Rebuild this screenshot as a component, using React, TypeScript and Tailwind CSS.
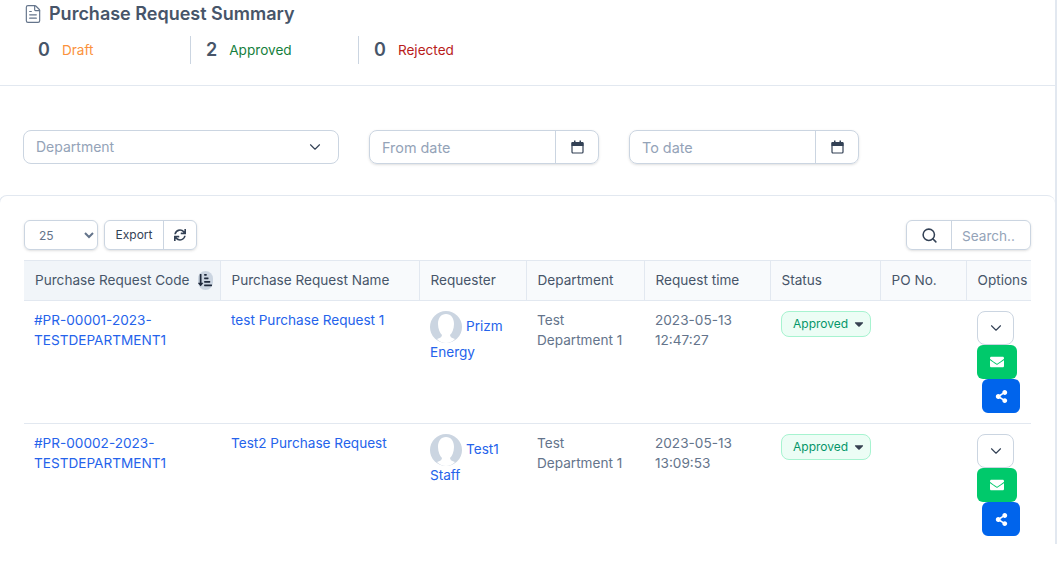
import { ChevronDown, FileText, Search } from 'lucide-react';
import { FaCaretDown, FaEnvelope, FaShareAlt, FaSortAmountDownAlt, FaSync } from 'react-icons/fa';

const rows = [
  { code: '#PR-00001-2023-', dept: 'TESTDEPARTMENT1', name: 'test Purchase Request 1', first: 'Prizm', last: 'Energy', date: '2023-05-13', time: '12:47:27' },
  { code: '#PR-00002-2023-', dept: 'TESTDEPARTMENT1', name: 'Test2 Purchase Request', first: 'Test1', last: 'Staff', date: '2023-05-13', time: '13:09:53' },
];

const headers = [
  { label: 'Purchase Request Name', w: 'w-[199px]' },
  { label: 'Requester', w: 'w-[107px]' },
  { label: 'Department', w: 'w-[118px]' },
  { label: 'Request time', w: 'w-[126px]' },
  { label: 'Status', w: 'w-[110px]' },
  { label: 'PO No.', w: 'w-[86px]' },
  { label: 'Options', w: 'w-[65px]' },
];

function Avatar() {
  return (
    <svg width="32" height="32" viewBox="0 0 32 32" className="inline-block align-middle mr-1">
      <circle cx="16" cy="16" r="16" fill="#cbd5e1" />
      <path d="M16 3c5 0 8 4 8 10 0 5-2 9-4 11 0 2 2 3 5 4-2.500 2.500-5.500 4-9 4s-6.500-1.500-9-4c3-1 5-2 5-4-2-2-4-6-4-11C8 7 11 3 16 3z" fill="#fff" />
    </svg>
  );
}

function CalendarIcon() {
  return (
    <svg width="13" height="14" viewBox="0 0 13 14" fill="none">
      <path d="M1.500 2h10a1 1 0 0 1 1 1v3H.5V3a1 1 0 0 1 1-1z" fill="#334155" />
      <rect x="3" y="0.500" width="1.500" height="3" fill="#334155" />
      <rect x="8.500" y="0.500" width="1.500" height="3" fill="#334155" />
      <rect x="1" y="2.500" width="11" height="10.500" rx="1" stroke="#334155" strokeWidth="1.200" />
    </svg>
  );
}

function DateField({ placeholder }: { placeholder: string }) {
  return (
    <div className="flex w-[230px] h-[34px] rounded-lg border border-[#cbd5e1] shadow-sm overflow-hidden">
      <input
        placeholder={placeholder}
        className="flex-1 min-w-0 pl-3 pt-0.5 text-[14.4px] outline-none placeholder:text-[#94a3b8]"
      />
      <div className="w-[43px] flex items-center justify-center border-l border-[#cbd5e1]">
        <CalendarIcon />
      </div>
    </div>
  );
}

function Stat({ value, label, color, line }: { value: number; label: string; color: string; line?: boolean }) {
  return (
    <div className={`w-[168px] h-7 pl-[15px] flex items-center gap-3 ${line ? 'border-r border-[#cbd5e1]' : ''}`}>
      <span className="text-lg font-semibold text-[#475569]">{value}</span>
      <span className={`text-[13.6px] ${color}`}>{label}</span>
    </div>
  );
}

export default function App() {
  return (
    <div className="w-[1057px] h-[544px] overflow-hidden border-r-2 border-[#e2e8f0] bg-white font-['Inter',sans-serif] text-[13.6px] text-[#64748b]">
      <div className="h-[86px] border-b border-[#e2e8f0]">
        <div className="pl-[23px] pt-[1px] flex items-center gap-1.5 h-[26px]">
          <FileText size={20} strokeWidth={1.4} className="text-[#64748b]" />
          <h1 className="text-lg font-semibold text-[#475569]">Purchase Request Summary</h1>
        </div>
        <div className="flex ml-[23px] mt-[10px]">
          <Stat value={0} label="Draft" color="text-[#fb923c]" line />
          <Stat value={2} label="Approved" color="text-[#15803d]" line />
          <Stat value={0} label="Rejected" color="text-[#b91c1c]" />
        </div>
      </div>

      <div className="flex gap-[30px] pl-[23px] pt-[44px]">
        <div className="w-[316px] h-[34px] rounded-lg border border-[#cbd5e1] flex items-center justify-between pl-3 pr-[14px]">
          <span className="text-sm text-[#94a3b8]">Department</span>
          <ChevronDown size={18} strokeWidth={1.5} className="text-[#334155]" />
        </div>
        <DateField placeholder="From date" />
        <DateField placeholder="To date" />
      </div>

      <div className="-ml-px mt-[31px] h-[360px] rounded-t-lg border-t border-l border-[#e2e8f0] pt-6 pl-6 pr-6">
        <div className="flex items-center justify-between h-[30px]">
          <div className="flex items-center gap-1.5">
            <select className="w-[74px] h-[30px] rounded-md border border-[#cbd5e1] pl-2.5 text-xs text-[#64748b] shadow-sm">
              <option>25</option>
            </select>
            <div className="flex h-[30px] rounded-md border border-[#cbd5e1] shadow-sm text-xs text-[#334155]">
              <div className="w-[58px] flex items-center justify-center">Export</div>
              <div className="w-[33px] flex items-center justify-center border-l border-[#cbd5e1]">
                <FaSync size={12} />
              </div>
            </div>
          </div>
          <div className="flex w-[125px] h-[30px] rounded-md border border-[#cbd5e1] shadow-sm">
            <div className="w-[45px] flex items-center justify-center border-r border-[#cbd5e1] text-[#334155]">
              <Search size={17} strokeWidth={2.2} />
            </div>
            <input placeholder="Search.." className="flex-1 min-w-0 pl-2.5 pt-0.5 text-[13.6px] outline-none placeholder:text-[#94a3b8]" />
          </div>
        </div>

        <table className="mt-[10px] w-[1007px] table-fixed border-collapse">
          <thead>
            <tr className="h-10 bg-[#f8fafc] border-y border-[#e2e8f0] text-[#475569]">
              <th className="w-[196px] pl-[11px] text-left font-normal bg-[#f1f5f9]">
                <span className="flex items-center justify-between pr-[7px]">
                  Purchase Request Code
                  <span className="w-[15px] h-[19px] rounded-full bg-[#cbd5e1] flex items-center justify-center text-[#1e293b]">
                    <FaSortAmountDownAlt size={14} />
                  </span>
                </span>
              </th>
              {headers.map((h) => (
                <th key={h.label} className={`${h.w} pl-[11px] text-left font-normal whitespace-nowrap border-l border-[#e2e8f0]`}>
                  {h.label}
                </th>
              ))}
            </tr>
          </thead>
          <tbody>
            {rows.map((r) => (
              <tr key={r.code} className="h-[123px] border-b border-[#e2e8f0] last:border-b-0 align-top leading-5">
                <td className="pl-[10px] pt-[9px] text-[#2563eb]">{r.code}<br />{r.dept}</td>
                <td className="pl-[11px] pt-[9px] text-[#2563eb]">{r.name}</td>
                <td className="pl-[11px] pt-2.5 leading-[19px] text-[#2563eb]">
                  <Avatar />{r.first} {r.last}
                </td>
                <td className="pl-[11px] pr-4 pt-[9px]">Test Department 1</td>
                <td className="pl-[11px] pt-[9px]">{r.date}<br />{r.time}</td>
                <td className="pl-[11px] pt-2.5">
                  <span className="inline-flex items-center gap-1 w-[90px] h-[26px] pl-[11px] rounded-lg border border-[#a7f3d0] bg-[#ecfdf5] text-xs text-[#059669]">
                    Approved <FaCaretDown size={14} className="text-[#374151]" />
                  </span>
                </td>
                <td />
                <td className="pl-[11px] pt-2.5">
                  <div className="w-[37px] h-[34px] rounded-lg border border-[#cbd5e1] bg-white flex items-center justify-center text-[#334155]">
                    <ChevronDown size={18} strokeWidth={1.5} />
                  </div>
                  <div className="w-10 h-[34px] rounded-md bg-[#00c96b] flex items-center justify-center text-white">
                    <FaEnvelope size={14} />
                  </div>
                  <div className="ml-[5px] w-[38px] h-[34px] rounded-md bg-[#0064ec] flex items-center justify-center text-white">
                    <FaShareAlt size={13} />
                  </div>
                </td>
              </tr>
            ))}
          </tbody>
        </table>
      </div>
    </div>
  );
}
